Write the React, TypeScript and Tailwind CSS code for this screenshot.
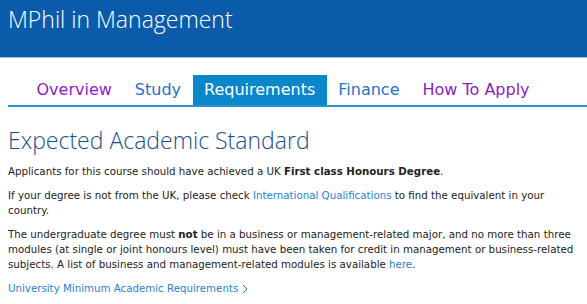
const tabs = [
  { label: "Overview", className: "text-[#8f1bc7]" },
  { label: "Study", className: "text-[#1f72c8]" },
  { label: "Requirements", className: "bg-[#0a87cb] text-white", active: true },
  { label: "Finance", className: "text-[#1f72c8]" },
  { label: "How To Apply", className: "text-[#8f1bc7]" },
];

const body = "font-['DejaVu_Sans',Verdana,sans-serif]";

const App = () => {
  return (
    <div className="w-[587px] h-[304px] overflow-hidden bg-white">
      <div className="h-[58px] bg-[#0a5cab] border-b border-[#9cc4e6] px-2 pt-[3px]">
        <h1 className="text-white text-[23px] font-light leading-[32px] font-['Open_Sans',sans-serif]">
          MPhil in Management
        </h1>
      </div>

      <div className="ml-2 mt-[17px] border-b-2 border-[#2a93cf] flex pl-[17px] h-[32px]">
        {tabs.map((t) => (
          <div
            key={t.label}
            className={`px-[11.5px] flex items-center text-[16px] ${body} ${t.className}`}
          >
            {t.label}
          </div>
        ))}
      </div>

      <div className="px-2">
        <h2 className="mt-[19px] text-[23px] font-light leading-[28px] text-[#1b4f8c] font-['Open_Sans',sans-serif]">
          Expected Academic Standard
        </h2>
        <div className={`mt-[10px] text-[10.25px] leading-[15px] text-[#222] ${body}`}>
          <p>
            Applicants for this course should have achieved a UK <b>First class Honours Degree</b>.
          </p>
          <p className="mt-[9px]">
            If your degree is not from the UK, please check{" "}
            <span className="text-[#1f7fd6]">International Qualifications</span> to find the equivalent in your
            country.
          </p>
          <p className="mt-[9px]">
            The undergraduate degree must <b>not</b> be in a business or management-related major, and no more than three
            modules (at single or joint honours level) must have been taken for credit in management or business-related
            subjects. A list of business and management-related modules is available{" "}
            <span className="text-[#1f7fd6]">here</span>.
          </p>
          <p className="mt-[9px] text-[#1f7fd6] flex items-center gap-[4px]">
            University Minimum Academic Requirements
            <svg width="6" height="10" viewBox="0 0 6 10" fill="none" stroke="currentColor" strokeWidth="1">
              <path d="M1 1l4 4-4 4" />
            </svg>
          </p>
        </div>
      </div>
    </div>
  );
};

export default App;
